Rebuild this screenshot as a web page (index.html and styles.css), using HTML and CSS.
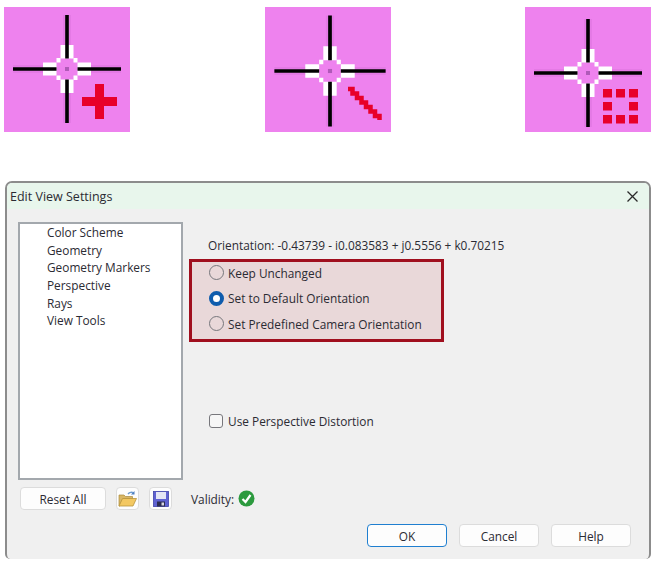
FILE: index.html
```html
<!DOCTYPE html>
<html lang="en">
<head>
<meta charset="utf-8">
<title>Edit View Settings</title>
<link rel="stylesheet" href="styles.css">
</head>
<body>
<div class="icons">
  <svg class="tool" width="126" height="125" viewBox="0 0 126 125">
    <defs>
      <g id="cross">
        <path d="M-54 0h43.500M10.500 0h43.500M0-54v43.500M0 10.500v43.500" stroke="#a040a8" stroke-width="8" opacity=".12" fill="none"/>
        <path d="M-24-6.500h13.500v13h-13.500zM10.500-6.500h13.500v13h-13.500zM-6.500-24h13v13.500h-13zM-6.500 10.500h13v13.500h-13z" fill="#fff"/>
        <path d="M-10.500-11h4v4.500h-4zM6.500-11h4v4.500h-4zM-10.500 6.500h4v4.500h-4zM6.500 6.500h4v4.500h-4z" fill="#fff"/>
        <path d="M-54 0h43.500M10.500 0h43.500M0-54v43.500M0 10.500v43.500" stroke="#000" stroke-width="3.600" fill="none"/>
        <rect x="-2" y="-2" width="4" height="4" fill="#b05ab8"/>
      </g>
    </defs>
    <rect width="126" height="125" fill="#ee82ee"/>
    <use href="#cross" x="63" y="62"/>
    <path d="M91 77h9v13h13v9h-13v13h-9v-13h-13v-9h13z" fill="#e8002a"/>
  </svg>
  <svg class="tool" width="126" height="125" viewBox="0 0 126 125">
    <rect width="126" height="125" fill="#ee82ee"/>
    <use href="#cross" transform="translate(65 64) scale(1.030)"/>
    <path d="M83 82h4.500v4.500h4.500v4.500h4.500v4.500h4.500v4.500h4.500v4.500h4.500v4.500h4.500v4" fill="none" stroke="#e8002a" stroke-width="4.500"/>
  </svg>
  <svg class="tool" width="126" height="125" viewBox="0 0 126 125">
    <rect width="126" height="125" fill="#ee82ee"/>
    <use href="#cross" x="63" y="66"/>
    <path d="M78 82h9v8.500h-9zM91 82h9v8.500h-9zM104 82h9v8.500h-9zM78 95h9v8.500h-9zM104 95h9v8.500h-9zM78 108h9v8.500h-9zM91 108h9v8.500h-9zM104 108h9v8.500h-9z" fill="#e8002a"/>
  </svg>
</div>

<section class="dialog">
  <header class="titlebar">
    <span class="title">Edit View Settings</span>
    <svg class="close" width="13" height="13" viewBox="0 0 13 13"><path d="M1.500 1.500l10 10M11.500 1.500l-10 10" stroke="#2a2a2a" stroke-width="1.300" fill="none"/></svg>
  </header>
  <div class="content">
    <div class="side">
      <ul class="tree">
        <li>Color Scheme</li>
        <li>Geometry</li>
        <li>Geometry Markers</li>
        <li>Perspective</li>
        <li>Rays</li>
        <li>View Tools</li>
      </ul>
      <div class="tools">
        <button class="btn reset">Reset All</button>
        <button class="btn square" aria-label="Open">
          <svg width="19" height="16" viewBox="0 0 19 16">
            <path d="M10 3c1.500-2 4-2.300 5.500-.8" fill="none" stroke="#6d9bd0" stroke-width="1.300"/>
            <path d="M16.500 0v3.500h-3.500z" fill="#4d7fc0"/>
            <path d="M1 4h5l1.500 1.500h7V8H5L2 15H1z" fill="#d9b766" stroke="#a98a3e" stroke-width=".7"/>
            <path d="M4.500 7.500H18.500l-3.500 7.500H1z" fill="#f3c862" stroke="#b8943e" stroke-width=".8"/>
          </svg>
        </button>
        <button class="btn square" aria-label="Save">
          <svg width="16" height="16" viewBox="0 0 16 16">
            <rect x=".5" y=".5" width="15" height="15" fill="#5f62d2" stroke="#4044a8" stroke-width=".8"/>
            <rect x="3" y="1" width="10" height="7" fill="#e4e6f4"/>
            <rect x="4" y="10.500" width="8" height="5" fill="#2c2c50"/>
            <rect x="8.500" y="11.500" width="2.500" height="3" fill="#d8d8e4"/>
          </svg>
        </button>
        <span class="validity">Validity:</span>
        <svg class="check" width="17" height="17" viewBox="0 0 17 17">
          <circle cx="8.500" cy="8.500" r="8" fill="#2c9a3e"/>
          <path d="M4.500 9l3 3 5-7" fill="none" stroke="#fff" stroke-width="2.200"/>
        </svg>
      </div>
    </div>
    <div class="panel">
      <p class="orientation">Orientation: -0.43739 - i0.083583 + j0.5556 + k0.70215</p>
      <div class="highlight">
        <label class="radio"><span class="dot"></span>Keep Unchanged</label>
        <label class="radio"><span class="dot on"></span>Set to Default Orientation</label>
        <label class="radio"><span class="dot"></span>Set Predefined Camera Orientation</label>
      </div>
      <label class="checkrow"><span class="box"></span>Use Perspective Distortion</label>
    </div>
  </div>
  <footer class="actions">
    <button class="btn act primary">OK</button>
    <button class="btn act">Cancel</button>
    <button class="btn act">Help</button>
  </footer>
</section>
</body>
</html>
```

FILE: styles.css
```css
* { box-sizing: border-box; }
html, body { margin: 0; padding: 0; background: #fff; }
body {
  width: 656px;
  height: 567px;
  overflow: hidden;
  font-family: "Open Sans", "Noto Sans", "Liberation Sans", sans-serif;
  font-size: 11.850px;
  color: #2b2b33;
}
.icons {
  display: flex;
  justify-content: space-between;
  padding: 7px 5px 0 4px;
}
.tool { display: block; filter: blur(.35px); }
.dialog {
  margin: 49px 0 0 5px;
  width: 646px;
  height: 378px;
  background: #f0f0f0;
  border: 2px solid #8c8c8c;
  border-bottom: 0;
  border-radius: 7px 7px 5px 5px;
  display: flex;
  flex-direction: column;
}
.titlebar {
  height: 26px;
  flex: none;
  background: #e8f6ec;
  border-radius: 5px 5px 0 0;
  display: flex;
  align-items: center;
  justify-content: space-between;
  padding: 0 10px 0 3px;
  font-size: 12.500px;
}
.content {
  flex: 1;
  display: flex;
  padding: 13px 0 0 11px;
}
.side { width: 171px; flex: none; }
.tree {
  list-style: none;
  margin: 0;
  width: 165px;
  height: 258px;
  padding: 0 0 0 27px;
  background: #fff;
  border: 2px solid #a3a8ad;
}
.tree li { height: 17.700px; line-height: 17.700px; }
.tools {
  display: flex;
  align-items: center;
  margin: 7px 0 0 2px;
  white-space: nowrap;
}
.btn {
  font: inherit;
  color: inherit;
  background: #fdfdfd;
  border: 1.500px solid #dcdcdc;
  border-radius: 4px;
  padding: 0;
  flex: none;
  display: flex;
  align-items: center;
  justify-content: center;
}
.reset { width: 86px; height: 23px; margin-right: 10px; }
.square { width: 23px; height: 23px; margin-right: 10px; }
.validity { flex: none; margin-left: 9px; margin-right: 4px; }
.check { flex: none; }
.panel { flex: 1; }
.orientation { margin: 14px 0 0 19px; line-height: 18px; white-space: nowrap; }
.highlight {
  width: 255px;
  height: 83px;
  margin-top: 5px;
  background: #e9d8d9;
  border: 3px solid #a00f1e;
  padding: 2px 0 0 17px;
  display: flex;
  flex-direction: column;
  gap: 8px;
}
.radio, .checkrow {
  display: flex;
  align-items: center;
  height: 17.500px;
}
.dot {
  width: 15px;
  height: 15px;
  margin-right: 4px;
  border-radius: 50%;
  border: 1.200px solid #77777c;
  flex: none;
}
.dot.on {
  background: #fff;
  border: 4.500px solid #0f5cad;
}
.checkrow { margin: 70px 0 0 20px; }
.box {
  width: 14px;
  height: 14px;
  margin-right: 5px;
  border: 1.200px solid #77777c;
  border-radius: 3px;
  background: #f6f6f6;
  flex: none;
}
.actions {
  flex: none;
  display: flex;
  justify-content: flex-end;
  gap: 12px;
  padding: 0 18px 12px 0;
}
.act { width: 80px; height: 23px; }
.primary { border-color: #1f7fd0; }
```
